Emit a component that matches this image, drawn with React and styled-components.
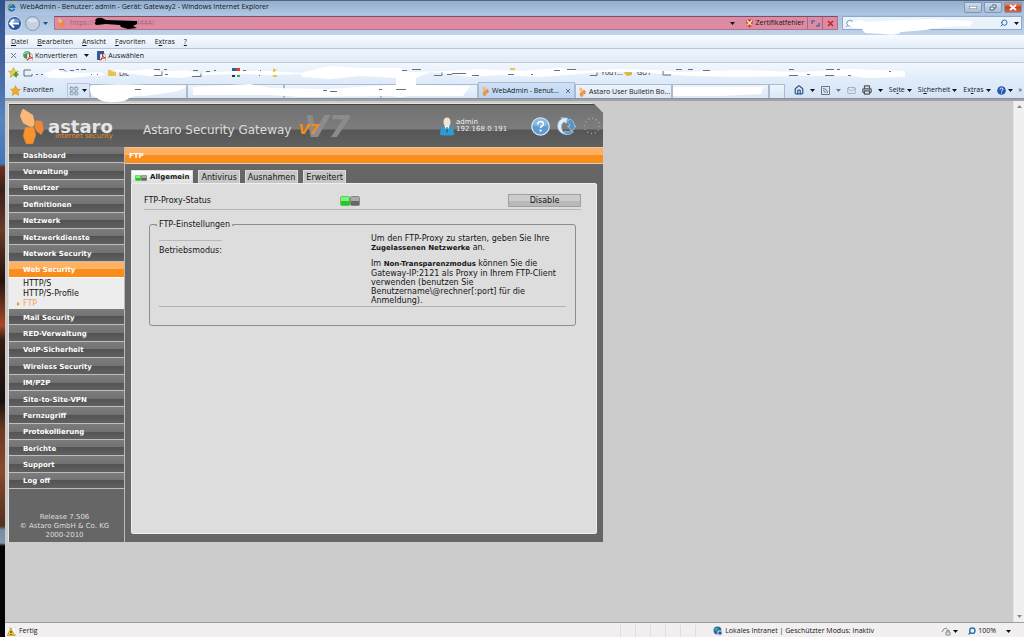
import React from "react";
import styled, { createGlobalStyle, css } from "styled-components";
import { Home, Mail, Printer, Search, LayoutGrid } from "lucide-react";

const Global = createGlobalStyle`
  * { box-sizing: border-box; }
  body { margin: 0; background: #ccc; }
  button, input, select { font: inherit; color: inherit; border: 0; padding: 0; margin: 0; background: none; }
  a { color: inherit; text-decoration: none; }
  p, ul, h1, h2 { margin: 0; padding: 0; list-style: none; font-weight: inherit; font-size: inherit; }
  svg { flex: none; display: block; }
`;

const ui = '"Open Sans", "Noto Sans", sans-serif';
const verdana = 'Verdana, "DejaVu Sans", sans-serif';

/* ---------- window ---------- */
const Desktop = styled.div`
  min-height: 100vh;
  padding-left: 5px;
  display: flex;
  background: linear-gradient(#31518f 0, #4263a0 60px, #5785c0 120px, #4475b4 164px, #6b2e1d 167px,
    #3a201b 190px, #6b3a28 230px, #22140f 280px, #a64a28 325px, #351b13 340px, #171010 400px, #6c3a22 430px,
    #8a4a2c 470px, #50301e 526px, #728da8 530px, #8297ab 543px, #050505 546px);
`;
const Window = styled.div`
  flex: 1;
  min-width: 0;
  display: flex;
  flex-direction: column;
  background: #ccc;
  font: 7px/10px ${ui};
  color: #151515;
`;
const Chrome = styled.header`position: relative;`;
const Bar = styled.div`
  display: flex;
  align-items: center;
`;
const TitleBar = styled(Bar)`
  height: 15px;
  padding: 0 2px 2px 2px;
  gap: 4px;
  border-top: 1px solid #53657d;
  background: linear-gradient(#94aecf, #afc7e3);
`;
const Title = styled.h1`flex: 1; white-space: nowrap;`;
const Captions = styled.div`display: flex; gap: 2px;`;
const CaptionButton = styled.button`
  width: 18px;
  height: 11px;
  display: grid;
  place-items: center;
  border: 1px solid #8196b0;
  border-radius: 0 0 2px 2px;
  background: ${p => (p.$close ? "linear-gradient(#dc9a87, #c64022 50%, #cf6a45)" : "linear-gradient(#cbdaea, #a9bfd8)")};
`;
const AddressRow = styled(Bar)`
  height: 20px;
  padding: 1px 2px 5px 2px;
  gap: 4px;
  background: linear-gradient(#a9bfdc, #bfd3eb);
`;
const NavButtons = styled.div`display: flex; align-items: center; gap: 3px; width: 43px;`;
const PlainButton = styled.button`display: flex; align-items: center; gap: 2px; white-space: nowrap;`;
const Address = styled.div`
  flex: 1;
  height: 14px;
  display: flex;
  align-items: center;
  gap: 3px;
  padding-left: 3px;
  background: #dc8ba3;
  border: 1px solid #b47188;
  border-top-color: #7b4f66;
`;
const Url = styled.input`
  flex: 1;
  min-width: 0;
  height: 10px;
  padding-left: 2px;
  color: #a9637a;
  outline: 0;
`;
const Certificate = styled(PlainButton)`margin: 0 0 0 8px; gap: 3px;`;
const AddressButton = styled.button`
  width: 15px;
  height: 12px;
  display: grid;
  place-items: center;
  border-left: 1px solid #a96a81;
  margin-left: -3px;
  &:nth-last-child(2) { margin-left: 0; }
`;
const SearchBox = styled.label`
  flex: 0 1 180px;
  height: 14px;
  display: flex;
  align-items: center;
  gap: 6px;
  padding: 0 2px;
  background: #eaf3fc;
  border: 1px solid #8ea9c6;
  input { flex: 1; min-width: 0; outline: 0; }
`;
const MirroredSearch = styled(Search)`transform: scaleX(-1);`;
const MenuBar = styled(Bar)`
  height: 14px;
  padding: 0 6px;
  gap: 9px;
  border-bottom: 1px solid #bcc6d2;
  background: linear-gradient(#f7fbff, #e2edf9);
`;
const ToolBar = styled(Bar)`
  height: 14px;
  padding: 0 6px;
  gap: 7px;
  border-bottom: 1px solid #c3ccd6;
  background: linear-gradient(#edf4fc, #e1ecf9);
`;
const LinksBar = styled(Bar)`
  height: 19px;
  padding: 0 3px;
  background: linear-gradient(#f1f7fe, #dfebf9);
`;
const TabBar = styled(Bar)`
  height: 17px;
  padding: 0 2px 0 5px;
  border-bottom: 1px solid #8593a5;
  background: linear-gradient(#dfebf9, #d4e4f6);
`;
const Favorites = styled(PlainButton)`width: 57px;`;
const QuickTabs = styled(PlainButton)`
  width: 23px;
  height: 14px;
  gap: 3px;
  padding-left: 1px;
  border: 1px solid #b6c5d8;
  border-bottom: 0;
  color: #77899c;
`;
const Tabs = styled.div`display: flex; flex: 1; min-width: 0; align-self: flex-end;`;
const BrowserTab = styled.button`
  flex: 0 1 ${p => (p.$blank ? 16 : 97)}px;
  min-width: 0;
  height: ${p => (p.$active ? 16 : 14)}px;
  align-self: flex-end;
  display: flex;
  align-items: center;
  gap: 3px;
  padding: 0 3px;
  white-space: nowrap;
  border: 1px solid #aabbd0;
  border-bottom: 0;
  background: ${p => (p.$active ? "linear-gradient(#cfe1f7, #bcd4f2)" : "linear-gradient(#eef4fc, #dbe7f5)")};
  span { flex: 1; text-align: left; }
`;
const Commands = styled.div`
  display: flex;
  align-items: center;
  gap: 6px;
`;
const Redaction = styled.svg`
  position: absolute;
  top: 0;
  left: -5px;
  pointer-events: none;
`;

/* ---------- viewport ---------- */
const Viewport = styled.div`flex: 1; display: flex; border-top: 2px solid #a2a2a2;`;
const Canvas = styled.div`flex: 1; min-width: 0; padding: 2px 0 0 3px;`;
const ScrollTrack = styled.div`
  width: 11px;
  display: flex;
  flex-direction: column;
  justify-content: space-between;
  align-items: center;
  padding: 4px 0;
  background: #f0f0f0;
  border-left: 1px solid #e2e2e2;
`;
const StatusBar = styled.footer`
  height: 15px;
  display: flex;
  align-items: center;
  padding: 2px 13px 0 2px;
  gap: 3px;
  background: #f1efef;
  border-top: 1px solid #9c9c9c;
`;
const StatusText = styled.span`flex: 1;`;
const Panes = styled.div`
  width: 90px;
  height: 12px;
  background: repeating-linear-gradient(90deg, #dedcdc 0 1px, transparent 1px 15px);
`;
const Zone = styled.div`flex: 0 1 225px; display: flex; gap: 2px; align-items: center; white-space: nowrap;`;
const StatusTools = styled.div`display: flex; gap: 10px; align-items: center;`;

/* ---------- web admin ---------- */
const Admin = styled.div`
  width: 595px;
  max-width: 100%;
  min-height: 439px;
  display: flex;
  flex-direction: column;
  font: 7px/9px ${verdana};
  background: #666;
  border: solid #e4e4e4;
  border-width: 1px 0 0 1px;
  clip-path: polygon(0 0, calc(100% - 10px) 0, 100% 10px, 100% 100%, 0 100%);
`;
const AdminHeader = styled.div`
  position: relative;
  height: 43px;
  display: flex;
  align-items: center;
  padding: 0 2px 0 11px;
  color: #fff;
  background: linear-gradient(#707070, #7d7d7d 24px, #565656 25px, #616161);
  border-top: 1px solid #454545;
`;
const Brand = styled.div`display: flex; gap: 3px; align-items: center; width: 123px;`;
const BrandName = styled.div`
  padding-top: 9px;
  font-weight: bold;
  font-size: 18px;
  line-height: 11px;
  text-align: right;
  color: #e6e6e6;
  small { display: block; font-size: 7px; line-height: 8px; font-weight: normal; color: #e98a2b; }
`;
const Product = styled.div`padding-top: 8px; font-size: 12px; line-height: 12px; color: #ddd; white-space: nowrap;`;
const Version = styled.div`
  position: relative;
  flex: 1;
  margin-left: 7px;
  padding-left: 6px;
  font: italic bold 31px/38px ${verdana};
  color: #8c8c8c;
  span { position: absolute; left: 0; top: 14px; font-size: 14px; line-height: 16px; color: #f58b1e; }
`;
const User = styled.div`
  display: flex;
  align-items: center;
  gap: 2px;
  width: 91px;
  line-height: 7px;
  color: #eee;
`;
const HeaderTools = styled.div`display: flex; gap: 7px; align-items: center;`;
const AdminBody = styled.div`flex: 1; display: flex;`;
const Sidebar = styled.nav`
  width: 116px;
  display: flex;
  flex-direction: column;
  border-right: 1px solid #bbb;
`;
const NavList = styled.ul`height: 342px; display: flex; flex-direction: column;`;
const NavItem = styled.li`
  flex: 1;
  display: flex;
  align-items: center;
  padding: 3px 0 0 14px;
  font-weight: bold;
  color: #fff;
  border-bottom: 1px solid #bdbdbd;
  background: linear-gradient(#7c7c7c, #727272 50%, #535353 50%, #606060);
  ${p => p.$active && css`
    border-color: #fff;
    background: linear-gradient(#fdb363 50%, #f98e1d 50%);
  `}
`;
const SubMenu = styled.li`
  height: 31px;
  padding: 1px 0 0 14px;
  font-size: 8px;
  line-height: 10px;
  background: #ededed;
`;
const SubLink = styled.a`
  display: block;
  position: relative;
  ${p => p.$active && css`
    color: #eea564;
    &::before {
      content: "";
      position: absolute;
      left: -6px;
      top: 3px;
      border: 2px solid transparent;
      border-left: 3px solid #e5913f;
    }
  `}
`;
const Release = styled.p`margin: auto 0 2px; padding-right: 4px; text-align: center; color: #ddd;`;
const Main = styled.main`flex: 1; min-width: 0; display: flex; flex-direction: column;`;
const PageTitle = styled.h2`
  height: 17px;
  padding: 4px;
  font-weight: bold;
  color: #fff;
  border-top: 1px solid #f6c28d;
  border-bottom: 1px solid #d8cfc4;
  background: linear-gradient(#fdb063 50%, #fa8e1b 50%);
`;
const PageTabs = styled.div`display: flex; gap: 5px; padding: 6px 6px 0;`;
const PageTab = styled.button`
  height: 13px;
  padding: 1px 2px 0;
  display: flex;
  align-items: center;
  gap: 3px;
  font-size: 8px;
  border: 1px solid #ddd;
  border-bottom: 0;
  background: #c6c6c6;
  ${p => p.$active && css`
    padding: 1px 3px 0;
    font-size: 7px;
    font-weight: bold;
    background: linear-gradient(#fff, #ddd);
  `}
`;
const Panel = styled.section`
  flex: 1;
  margin: 0 6px 8px;
  padding: 10px 15px 10px 12px;
  font-size: 8px;
  background: #ddd;
  border: 1px solid #eee;
  border-radius: 0 2px 2px 2px;
`;
const StatusRow = styled.div`
  display: grid;
  grid-template-columns: 196px 1fr 73px;
  align-items: center;
  height: 16px;
  padding-bottom: 3px;
  border-bottom: 1px solid #b7b7b7;
`;
const DisableButton = styled.button`
  height: 13px;
  border: 1px solid #a0a0a0;
  background: linear-gradient(#ccc 50%, #b9b9b9 50%);
`;
const Settings = styled.fieldset`
  margin: 10px 5px 0;
  padding: 5px 9px 18px;
  border: 1px solid #8d8d8d;
  border-radius: 3px;
  min-width: 0;
`;
const Legend = styled.legend`
  padding: 0;
  display: flex;
  align-items: center;
  gap: 2px;
  margin-left: -4px;
  &::before, &::after { content: ""; width: 2px; height: 2px; border-radius: 1px; background: #888; }
`;
const SettingRow = styled.div`
  display: flex;
  justify-content: space-between;
  padding-bottom: 1px;
  border-bottom: 1px solid #b2b2b2;
`;
const SettingLabel = styled.div`
  width: 63px;
  height: 14px;
  margin-top: 6px;
  padding-top: 5px;
  border-top: 1px solid #b9b9b9;
`;
const Help = styled.div`
  flex: 0 1 195px;
  padding-right: 4px;
  display: grid;
  gap: 6px;
  b { font-size: 7px; }
`;

/* ---------- drawings ---------- */
const Arrow = ({ color = "#111" }) => (
  <svg width="5" height="3" viewBox="0 0 5 3"><path d="M0 0h5L2.5 3z" fill={color} /></svg>
);
const Led = ({ small }) => (
  <svg width={small ? 12 : 20} height={small ? 6 : 10} viewBox="0 0 20 10">
    <rect x=".3" y=".3" width="9.6" height="9.4" rx="1.5" fill="#25c52c" />
    <path d="M1 1h8v4H1z" fill="#86ee7e" />
    <rect x="10.3" y=".3" width="9.4" height="9.4" rx="1.5" fill="#666" />
    <path d="M11 1h8v4h-8z" fill="#aaa" />
  </svg>
);
const Ie = () => (
  <svg width="9" height="10" viewBox="0 0 9 10">
    <path d="M7.4 6.7A3 3 0 1 1 7.5 5H2" fill="none" stroke="#1c74bd" strokeWidth="1.8" />
    <path d="M1 9C-1 7 5 0 8.5 1" fill="none" stroke="#e3b83e" />
  </svg>
);
const AstaroMark = ({ w = 25, h = 37 }) => (
  <svg width={w} height={h} viewBox="0 0 25 37">
    <path d="M2 2Q3 0 5 2l8 5 2 9-3 4L3 15 0 8z" fill="#fdb878" />
    <path d="M16 12l6 1 2 9-3 5-5-4-2-6z" fill="#ef8835" stroke="#777" strokeWidth=".4" />
    <path d="M5 19h9l2 8-3 9H6l-3-8z" fill="#f9922b" stroke="#777" strokeWidth=".4" />
  </svg>
);
const Round = ({ back }) => (
  <svg width="15" height="15" viewBox="0 0 15 15">
    <circle cx="7.5" cy="7.5" r="7" fill={back ? "#2857a6" : "#c3d0df"} stroke={back ? "#dce8f6" : "#8296b0"} />
    <path d="M2 5a6 4 0 0 1 11 0q-5 3-11 0z" fill="#fff" opacity=".4" />
    {back && <path d="M7 3.5l-4 4 4 4M3.5 7.5H12" fill="none" stroke="#fff" strokeWidth="2" />}
  </svg>
);
const Star = ({ color = "#f5ac24", plus }) => (
  <svg width="11" height="11" viewBox="0 0 11 11">
    <path d="M5.5 .5L7 4l3.5 .3L8 6.8l.7 3.6-3.2-2-3.2 2L3 6.8 .5 4.3 4 4z" fill={color} stroke="#c98919" strokeWidth=".5" />
    {plus && <path d="M8 5v5M5.5 7.5h5" stroke="#45a03c" strokeWidth="2" />}
  </svg>
);
const Pdf = ({ globe }) => (
  <svg width="10" height="10" viewBox="0 0 10 10">
    {globe
      ? <g><circle cx="4" cy="4" r="3.8" fill="#439a4b" /><path d="M1 3q3-3 6 1" stroke="#d9e8ef" fill="none" /></g>
      : <path d="M1 0h7v9H1z" fill="#33579a" />}
    <path d="M4 3h5l1 7H4z" fill="#fff" stroke="#555" strokeWidth=".4" />
    <path d="M4.5 9q3-3 2-6 0 4 3 4-3-.5-5 2" fill="none" stroke="#c5262a" strokeWidth=".9" />
  </svg>
);
const Shield = () => (
  <svg width="7" height="9" viewBox="0 0 7 9">
    <path d="M3.5 0L7 1.5Q7 6 3.5 9 0 6 0 1.5z" fill="#cf4a40" />
    <path d="M1 1.5l4.5 4.5M6 1.5L1.5 6" stroke="#ffe9b5" strokeWidth="1.3" />
  </svg>
);
const UserIcon = () => (
  <svg width="14" height="19" viewBox="0 0 14 19">
    <path d="M0 18q0-9 4-9h6q4 0 4 9-7 1-14 0z" fill="#2f9bce" />
    <path d="M4.5 9h5L7 15z" fill="#fff" /><path d="M6.5 10h1l.5 4-1 2-1-2z" fill="#1b5f8e" />
    <ellipse cx="7" cy="5" rx="3.5" ry="4.5" fill="#f1e5cf" />
  </svg>
);
const HelpIcon = () => (
  <svg width="19" height="19" viewBox="0 0 19 19">
    <circle cx="9.5" cy="9.5" r="8.7" fill="#5d9bd1" stroke="#d7e9f7" strokeWidth="1.3" />
    <path d="M2 8a7.5 6.5 0 0 1 15 0q-7 3-15 0z" fill="#a6ccec" opacity=".6" />
    <path d="M6.8 7.3q0-2.8 2.8-2.8t2.7 2.4q0 1.4-1.5 2.2-1.2.7-1.2 2" fill="none" stroke="#fff" strokeWidth="1.6" />
    <circle cx="9.6" cy="13.6" r="1.1" fill="#fff" />
  </svg>
);
const RefreshIcon = () => (
  <svg width="19" height="19" viewBox="0 0 19 19">
    <path d="M6 17Q0 14 .5 8.500 1 3 5 2L3.500 .5 11 1 9 7 7.500 5Q4.500 6 4.500 10 4.500 14 9 17.500z" fill="#dcecf8" stroke="#78a9cf" strokeWidth=".6" />
    <path d="M12 2Q17 3 17.500 9H19L15 14 10.500 9H13Q13 6.500 10.500 5.500z" fill="#4f93cb" stroke="#c3def1" strokeWidth=".6" />
    <path d="M8.500 17.500Q13 18.500 16.500 15L14.500 13.500Q11 15.500 7.500 14z" fill="#5b9bcf" stroke="#c3def1" strokeWidth=".6" />
  </svg>
);
const Spinner = () => (
  <svg width="18" height="18" viewBox="0 0 18 18">
    <circle cx="9" cy="9" r="7.5" fill="none" stroke="#b5b5b5" strokeWidth="1.5" strokeDasharray="1 2.9" opacity=".8" />
  </svg>
);
const SmallHelp = () => (
  <svg width="9" height="9" viewBox="0 0 9 9">
    <circle cx="4.5" cy="4.5" r="4.3" fill="#2458ad" />
    <path d="M3 3.5q0-1.5 1.5-1.5T6 3.4Q6 4.3 4.6 4.9V5.5M4.6 6.5v1" fill="none" stroke="#fff" />
  </svg>
);

const Scribbles = () => (
  <Redaction width="1024" height="104" viewBox="0 0 1024 104" aria-hidden="true">
    <path d="M95 21q1-4 7-3l4 2 31 1v3l-4 2 4 2-9 1-7-2-1-2-14-1-9 1q-4-1-1-4z" fill="#000" />
    <path d="M847 23l14-3 6 2q30-2 60-3l45 2-1 5q-28 0-45 4l-25 2q-4 4-18 2l-18-1-3-4q-13-1-15-6z" fill="#fff" />
    <text x="119" y="76" fontSize="7" fill="#222">Dlc</text>
    <text x="601" y="75" fontSize="7" fill="#222">YouT...</text>
    <text x="637" y="75" fontSize="7" fill="#222">GUT</text>
    <path d="M108 70h8v6h-8z" fill="#e6c54c" />
    <path d="M626 70l6 1v4l-5 1-3-3z" fill="#dcb93a" />
    <path d="M42 74L56 69 62 72 84 73 100 72 106 75 90 76 70 78 50 78zM110 71Q118 68 132 71L150 69 160 72 185 70 200 73 235 71 270 71 300 73 330 66 360 68 400 68 410 72 445 71 480 69 520 71 560 68 580 71 620 69 655 70 680 72 740 70 800 72 850 69 905 71V77L868 78 850 76 800 76 740 77 690 76 662 74 640 72 600 72 580 74 540 77 500 75 470 77 450 74 430 72 416 78V90H396V78L360 76 330 79 303 77 300 74 270 75 240 74 200 75 180 78 150 76 132 74z" fill="#fff" />
    <g fill="none" stroke="#66717c" strokeWidth="1">
      <path d="M24 70h7M24 70v6h8v-2M36 74.5h2m3 0h2M59 69.5h5l2 2M70 70.5h4m2-1h3m2 0h5M91 74.5h1m5 0h1M154 75.5h8v-4m3 3h3M192 76.5h9v-3M154 69.5h6m4 0h3M193 70.5h5m8 1h4m4-1h2M243 70.5h3m14 0h1m-2 5h1M402 70.5h5m5-1h9M434 75.5h8v-3m5 2h4l2-1h13m6 2h7M508 74.5h6m17 0h2M554 70.5h6m7-1h9M590 75.5h7v-3M663 71v4h8M676 69.5h6m6 0h5M703 70.5h7M789 75.5h9m9-1h3M825 75.500h9m14 0h3M889 71.5h2M789 69.5h5m32 0h8m3 0h3" />
    </g>
    <path d="M232 68h4v3h-4z" fill="#295cad" /><path d="M236 68h4v3h-4z" fill="#d34336" />
    <path d="M232 75h3v2h-3z" fill="#333" /><path d="M237 75h3v2h-3z" fill="#49a94b" />
    <path d="M273 68l4 2-3 2h-1zM273 75h4v2h-4zM510 68h5v2h-5z" fill="#e6c54c" />
    <path d="M90 86Q110 83 146 85L187 86Q180 92 165 93L145 96Q135 95 129 98 126 102 115 102 101 103 96 97 89 96 90 86zM193 87L250 84 270 88 330 89 385 85H416L470 86 463 96H410L400 97 390 96 300 97 270 95 193 95zM673 87L763 87 761 94 721 96H673z" fill="#fff" />
    <path d="M135 89.5h6m182 1h4m3 1h7M379 89.500h3m14 0h10" stroke="#67707b" />
  </Redaction>
);

/* ---------- content ---------- */
const Key = ({ pre = "", k, post = "" }) => <span>{pre}<u>{k}</u>{post}</span>;
const menus = [["", "D", "atei"], ["", "B", "earbeiten"], ["", "A", "nsicht"], ["", "F", "avoriten"], ["E", "x", "tras"], ["", "?", ""]];
const before = ["Dashboard", "Verwaltung", "Benutzer", "Definitionen", "Netzwerk", "Netzwerkdienste", "Network Security", "Web Security"];
const after = ["Mail Security", "RED-Verwaltung", "VoIP-Sicherheit", "Wireless Security", "IM/P2P", "Site-to-Site-VPN", "Fernzugriff", "Protokollierung", "Berichte", "Support", "Log off"];

function BrowserChrome() {
  return (
    <Chrome>
      <TitleBar>
        <Ie />
        <Title>WebAdmin - Benutzer: admin - Gerät: Gateway2 - Windows Internet Explorer</Title>
        <Captions>
          <CaptionButton aria-label="Minimieren"><svg width="8" height="3"><path d="M0 0h8v3H0z" fill="#fff" stroke="#607080" /></svg></CaptionButton>
          <CaptionButton aria-label="Wiederherstellen"><svg width="8" height="7"><path d="M3 1h4v3H5M1 3h4v3H1z" fill="#eef" stroke="#53647a" /></svg></CaptionButton>
          <CaptionButton $close aria-label="Schließen"><svg width="8" height="7"><path d="M1 1l6 5m0-5L1 6" stroke="#fff" strokeWidth="2" /></svg></CaptionButton>
        </Captions>
      </TitleBar>
      <AddressRow>
        <NavButtons>
          <PlainButton aria-label="Zurück"><Round back /></PlainButton>
          <PlainButton aria-label="Vorwärts"><Round /></PlainButton>
          <PlainButton aria-label="Verlauf"><Arrow color="#24517f" /></PlainButton>
        </NavButtons>
        <Address>
          <AstaroMark w={7} h={10} />
          <Url aria-label="Adresse" defaultValue={"https://" + "\u00a0".repeat(22) + ":4444/"} />
          <PlainButton aria-label="Adressliste"><Arrow /></PlainButton>
          <Certificate><Shield />Zertifikatfehler</Certificate>
          <AddressButton aria-label="Aktualisieren"><svg width="9" height="9"><path d="M1 5V2h3M8 4v3H5" fill="none" stroke="#3f70b0" strokeWidth="1.5" /></svg></AddressButton>
          <AddressButton aria-label="Abbrechen"><svg width="7" height="7"><path d="M1 1l5 5m0-5L1 6" stroke="#b12a2a" strokeWidth="1.5" /></svg></AddressButton>
        </Address>
        <SearchBox>
          <MirroredSearch size={9} color="#71879e" />
          <input aria-label="Suchen" />
          <MirroredSearch size={8} strokeWidth={3} color="#246eae" />
          <Arrow />
        </SearchBox>
      </AddressRow>
      <MenuBar>
        {menus.map(([a, b, c]) => <PlainButton key={b + c}><Key pre={a} k={b} post={c} /></PlainButton>)}
      </MenuBar>
      <ToolBar>
        <PlainButton aria-label="Leiste schließen"><svg width="5" height="5"><path d="M0 0l5 5m0-5L0 5" stroke="#70757c" /></svg></PlainButton>
        <PlainButton><Pdf globe />Konvertieren</PlainButton>
        <Arrow />
        <PlainButton><Pdf />Auswählen</PlainButton>
      </ToolBar>
      <LinksBar><PlainButton aria-label="Zu Favoriten hinzufügen"><Star color="#e5cf4a" plus /></PlainButton></LinksBar>
      <TabBar>
        <Favorites><Star />Favoriten</Favorites>
        <QuickTabs aria-label="Schnellregister"><LayoutGrid size={10} /><Arrow /></QuickTabs>
        <Tabs>
          {[1, 2, 3, 4].map(n => <BrowserTab key={n} aria-label={`Registerkarte ${n}`} />)}
          <BrowserTab $active><AstaroMark w={7} h={10} /><span>WebAdmin - Benut...</span>
            <svg width="6" height="6"><path d="M1 1l4 4m0-4L1 5" stroke="#56718f" /></svg>
          </BrowserTab>
          <BrowserTab><AstaroMark w={7} h={10} /><span>Astaro User Bulletin Bo...</span></BrowserTab>
          <BrowserTab aria-label="Registerkarte 7" />
          <BrowserTab $blank aria-label="Neue Registerkarte" />
        </Tabs>
        <Commands>
          <PlainButton aria-label="Startseite"><Home size={10} strokeWidth={3} color="#345a86" /></PlainButton><Arrow />
          <PlainButton aria-label="Feeds">
            <svg width="9" height="9" viewBox="0 0 9 9"><path d="M.5 .5h8v8h-8zM2 2.5q4 0 4.500 4.500M2 4.500q2 0 2.500 2.500" fill="none" stroke="#6c747c" /></svg>
          </PlainButton><Arrow color="#777" />
          <PlainButton aria-label="Mail"><Mail size={9} color="#9aa2aa" /></PlainButton>
          <PlainButton aria-label="Drucken"><Printer size={10} strokeWidth={3} color="#555" /></PlainButton><Arrow />
          <PlainButton><Key pre="Se" k="i" post="te" /><Arrow /></PlainButton>
          <PlainButton><Key pre="Si" k="c" post="herheit" /><Arrow /></PlainButton>
          <PlainButton><Key pre="Ex" k="t" post="ras" /><Arrow /></PlainButton>
          <PlainButton aria-label="Hilfe"><SmallHelp /><Arrow /></PlainButton>
          <span>»</span>
        </Commands>
      </TabBar>
      <Scribbles />
    </Chrome>
  );
}

function WebAdmin() {
  return (
    <Admin>
      <AdminHeader>
        <Brand><AstaroMark /><BrandName>astaro<small>internet security</small></BrandName></Brand>
        <Product>Astaro Security Gateway</Product>
        <Version>V7<span>V7</span></Version>
        <User><UserIcon /><div>admin<br />192.168.0.191</div></User>
        <HeaderTools>
          <PlainButton aria-label="Hilfe"><HelpIcon /></PlainButton>
          <PlainButton aria-label="Neu laden"><RefreshIcon /></PlainButton>
          <Spinner />
        </HeaderTools>
      </AdminHeader>
      <AdminBody>
        <Sidebar>
          <NavList>
            {before.map(t => <NavItem key={t} $active={t === "Web Security"}><a href="#nav">{t}</a></NavItem>)}
            <SubMenu>
              <SubLink href="#http">HTTP/S</SubLink>
              <SubLink href="#profile">HTTP/S-Profile</SubLink>
              <SubLink href="#ftp" $active>FTP</SubLink>
            </SubMenu>
            {after.map(t => <NavItem key={t}><a href="#nav">{t}</a></NavItem>)}
          </NavList>
          <Release>Release 7.506<br />© Astaro GmbH &amp; Co. KG<br />2000-2010</Release>
        </Sidebar>
        <Main>
          <PageTitle>FTP</PageTitle>
          <PageTabs>
            <PageTab $active><Led small />Allgemein</PageTab>
            <PageTab>Antivirus</PageTab>
            <PageTab>Ausnahmen</PageTab>
            <PageTab>Erweitert</PageTab>
          </PageTabs>
          <Panel>
            <StatusRow><span>FTP-Proxy-Status</span><Led /><DisableButton>Disable</DisableButton></StatusRow>
            <Settings>
              <Legend>FTP-Einstellungen</Legend>
              <SettingRow>
                <SettingLabel>Betriebsmodus:</SettingLabel>
                <Help>
                  <p>Um den FTP-Proxy zu starten, geben Sie Ihre <b>Zugelassenen Netzwerke</b> an.</p>
                  <p>Im <b>Non-Transparenzmodus</b> können Sie die Gateway-IP:2121 als Proxy in Ihrem FTP-Client verwenden (benutzen Sie Benutzername\@rechner[:port] für die Anmeldung).</p>
                </Help>
              </SettingRow>
            </Settings>
          </Panel>
        </Main>
      </AdminBody>
    </Admin>
  );
}

export default function App() {
  return (
    <Desktop>
      <Global />
      <Window>
        <BrowserChrome />
        <Viewport>
          <Canvas><WebAdmin /></Canvas>
          <ScrollTrack>
            <svg width="5" height="3"><path d="M0 3h5L2.5 0z" fill="#888" /></svg>
            <Arrow color="#888" />
          </ScrollTrack>
        </Viewport>
        <StatusBar>
          <svg width="9" height="9" viewBox="0 0 9 9"><path d="M3 0h6v8H4z" fill="#fff" stroke="#aaa" strokeWidth=".5" /><path d="M4 1l4 8H0z" fill="#edc52b" stroke="#8b7213" strokeWidth=".5" /><path d="M4 4v2m0 1v1" stroke="#222" /></svg>
          <StatusText>Fertig</StatusText>
          <Panes />
          <Zone>
            <svg width="10" height="10" viewBox="0 0 10 10"><circle cx="4.5" cy="4.5" r="4" fill="#286eae" /><path d="M1 3q3-3 4 0L3 5z" fill="#51ad60" /><path d="M5 5h4v4H5z" fill="#24548c" stroke="#dce9f5" /></svg>
            Lokales Intranet | Geschützter Modus: Inaktiv
          </Zone>
          <StatusTools>
            <PlainButton aria-label="Schutz"><svg width="10" height="9"><path d="M1 5q1-4 5-4M5 5h4v3H5zM6 5V3h2v2" fill="none" stroke="#888" /></svg><Arrow /></PlainButton>
            <PlainButton><MirroredSearch size={8} strokeWidth={4} color="#2e70ad" />100%</PlainButton>
            <Arrow />
          </StatusTools>
        </StatusBar>
      </Window>
    </Desktop>
  );
}
